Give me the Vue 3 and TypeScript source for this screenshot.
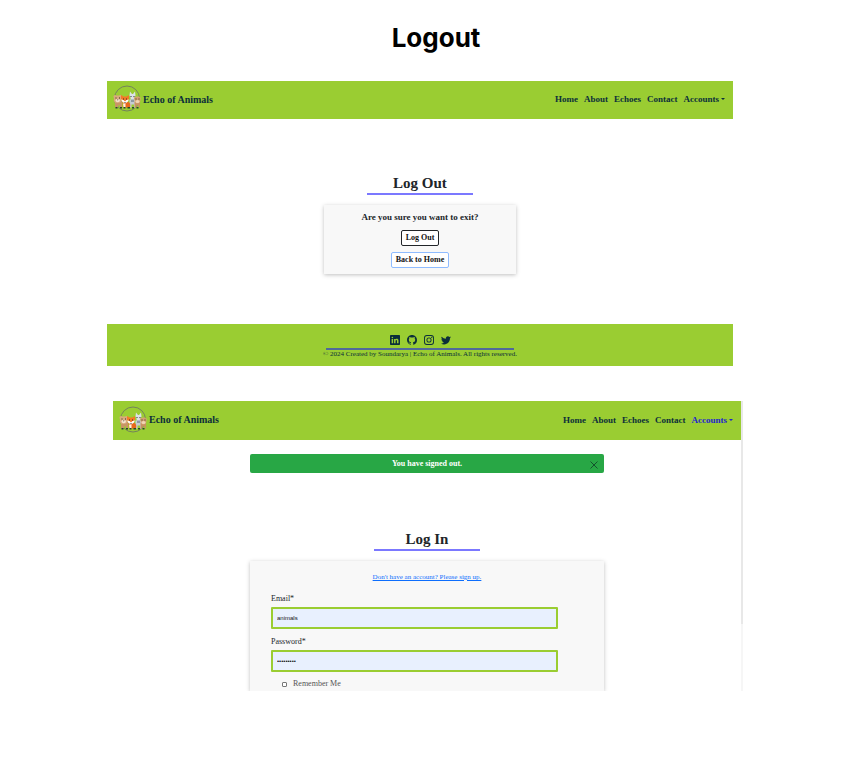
<script setup lang="ts">
import { defineComponent, h, ref } from 'vue'

const links: string[] = ['Home', 'About', 'Echoes', 'Contact']
const email = ref('animals')
const password = ref('animals24')
const remember = ref(false)

interface Social { name: string; path: string }
const socials: Social[] = [
  { name: 'LinkedIn', path: 'M0 1.2C0 .5.5 0 1.200 0h13.600C15.500 0 16 .5 16 1.200v13.600c0 .7-.5 1.200-1.200 1.200H1.200C.5 16 0 15.500 0 14.800zM5 13.300V6.200H2.600v7.100zM3.800 5.200c.8 0 1.300-.6 1.300-1.200S4.600 2.700 3.800 2.700 2.500 3.300 2.500 4s.5 1.200 1.300 1.200zM8.900 13.300V9.400c0-1 .5-1.500 1.200-1.500.8 0 1.100.6 1.100 1.500v3.900h2.400V9.200c0-2.200-1.200-3.200-2.700-3.200-1.300 0-1.800.7-2.100 1.200v-1H6.500v7.100z' },
  { name: 'GitHub', path: 'M8 0C3.580 0 0 3.580 0 8c0 3.540 2.290 6.530 5.470 7.590.4.070.55-.17.55-.38 0-.19-.01-.82-.01-1.490-2.010.37-2.530-.49-2.690-.94-.09-.23-.48-.94-.82-1.130-.28-.15-.68-.52-.01-.53.63-.01 1.080.58 1.230.82.72 1.210 1.870.87 2.330.66.07-.52.28-.87.51-1.070-1.780-.2-3.640-.89-3.640-3.950 0-.87.31-1.590.82-2.150-.08-.2-.36-1.020.08-2.120 0 0 .67-.21 2.200.82a7.600 7.600 0 0 1 4 0c1.530-1.040 2.200-.82 2.200-.82.44 1.100.16 1.920.08 2.120.51.56.82 1.270.82 2.150 0 3.070-1.870 3.750-3.650 3.950.29.25.54.73.54 1.480 0 1.070-.01 1.930-.01 2.200 0 .21.15.46.55.38A8 8 0 0 0 16 8c0-4.420-3.580-8-8-8z' },
  { name: 'Instagram', path: 'M4.700 0h6.600A4.700 4.700 0 0 1 16 4.700v6.600a4.700 4.700 0 0 1-4.700 4.700H4.700A4.700 4.700 0 0 1 0 11.300V4.700A4.700 4.700 0 0 1 4.700 0zM4.700 1.500a3.200 3.200 0 0 0-3.200 3.200v6.600a3.200 3.200 0 0 0 3.200 3.200h6.600a3.200 3.200 0 0 0 3.200-3.200V4.700a3.200 3.200 0 0 0-3.200-3.200zM8 3.900a4.100 4.100 0 1 1 0 8.200 4.100 4.100 0 0 1 0-8.200zM8 5.300a2.700 2.700 0 1 0 0 5.400 2.700 2.700 0 0 0 0-5.400zM12.300 2.700a1 1 0 1 1 0 2 1 1 0 0 1 0-2z' },
  { name: 'Twitter', path: 'M5.026 15c6.038 0 9.341-5.003 9.341-9.334 0-.14 0-.282-.006-.422A6.685 6.685 0 0 0 16 3.542a6.658 6.658 0 0 1-1.889.518 3.301 3.301 0 0 0 1.447-1.817 6.533 6.533 0 0 1-2.087.793A3.286 3.286 0 0 0 7.875 6.030 9.325 9.325 0 0 1 1.114 2.600a3.289 3.289 0 0 0 1.018 4.382A3.323 3.323 0 0 1 .64 6.575v.045a3.288 3.288 0 0 0 2.632 3.218 3.203 3.203 0 0 1-.865.115 3.230 3.230 0 0 1-.614-.057 3.283 3.283 0 0 0 3.067 2.277A6.588 6.588 0 0 1 0 13.580 9.290 9.290 0 0 0 5.026 15z' },
]

// Brand emblem: bear, fox, donkey and calf standing in front of a thin ring.
const BrandLogo = defineComponent({
  setup: () => () =>
    h('svg', { width: 28, height: 28, viewBox: '0 0 56 56', 'aria-hidden': 'true' }, [
      h('circle', { cx: 28, cy: 27, r: 25, fill: 'none', stroke: '#74845a', 'stroke-width': 2 }),
      // bear
      h('path', { d: 'M4 32h14v13h-4v-4h-4v4H4z', fill: '#c89566' }),
      h('path', { d: 'M1 23q0-3 3-3 2 0 3 1h5q1-1 3-1 3 0 3 3l-1 4q1 9-8 9T2 27z', fill: '#d9aa7c' }),
      h('ellipse', { cx: 9.5, cy: 31, rx: 4.5, ry: 3.5, fill: '#f4e2cb' }),
      h('path', { d: 'M8 29h3l-1.500 2zM5 25h2v2H5zM12 25h2v2h-2z', fill: '#3b2b20' }),
      // donkey
      h('path', { d: 'M33 29h12v16h-3v-6h-5v6h-4z', fill: '#c5ccd3' }),
      h('path', { d: 'M33 21l1-8 4 5h2l4-5 1 8-2 4-1 8h-6l-1-8z', fill: '#dce2e8' }),
      h('path', { d: 'M36 29h6v5h-6z', fill: '#8f99a5' }),
      h('path', { d: 'M35 22h2v2h-2zM41 22h2v2h-2z', fill: '#333' }),
      // calf
      h('path', { d: 'M43 33h11v12h-3v-4h-4v4h-4z', fill: '#c89261' }),
      h('path', { d: 'M41 25h3l2-2h6l2 2h2l-1 4q0 8-6 8t-6-8z', fill: '#d3a172' }),
      h('ellipse', { cx: 49, cy: 33, rx: 4, ry: 3, fill: '#f1d5b4' }),
      h('path', { d: 'M45 27h2v2h-2zM51 27h2v2h-2z', fill: '#3b2b20' }),
      // fox
      h('path', { d: 'M19 34h12q5 2 3 11H20z', fill: '#e8691d' }),
      h('path', { d: 'M20 37h5v8h-4z', fill: '#fff1de' }),
      h('path', { d: 'M16 20l5 3h6l5-3v8l-3 5-5 4-5-4-3-5z', fill: '#f37a27' }),
      h('path', { d: 'M16 29l5 1 3 3 3-3 5-1-3 5-5 3-5-3z', fill: '#fff' }),
      h('path', { d: 'M23 34h2v2h-2zM20 27h2v2h-2zM26 27h2v2h-2z', fill: '#3b2b20' }),
      // paws
      h('path', { d: 'M5 44h4v3H5zM14 44h4v3h-4zM21 44h4v3h-4zM29 44h5v3h-5zM38 44h4v3h-4zM47 44h4v3h-4z', fill: '#24472c' }),
    ]),
})
</script>

<template>
  <main class="page">
    <h1 class="title">Logout</h1>

    <section class="screen-logout">
      <header class="bar">
        <a class="brand" href="#"><BrandLogo />Echo of Animals</a>
        <nav class="nav">
          <a v-for="l in links" :key="l" href="#">{{ l }}</a>
          <a class="drop" href="#">Accounts</a>
        </nav>
      </header>
      <div class="body">
        <h2 class="heading">Log Out</h2>
        <form class="card confirm" @submit.prevent>
          <p class="question">Are you sure you want to exit?</p>
          <button class="btn dark" type="submit">Log Out</button>
          <button class="btn blue" type="button">Back to Home</button>
        </form>
      </div>
      <footer class="footer">
        <div class="socials">
          <a v-for="s in socials" :key="s.name" href="#" :aria-label="s.name">
            <svg width="10" height="10" viewBox="0 0 16 16"><path :d="s.path" fill="currentColor" fill-rule="evenodd" /></svg>
          </a>
        </div>
        <hr class="rule" />
        <p class="copy">© 2024 Created by Soundarya | Echo of Animals. All rights reserved.</p>
      </footer>
    </section>

    <section class="screen-login">
      <div class="view">
        <header class="bar tall">
          <a class="brand" href="#"><BrandLogo />Echo of Animals</a>
          <nav class="nav">
            <a v-for="l in links" :key="l" href="#">{{ l }}</a>
            <a class="drop active" href="#">Accounts</a>
          </nav>
        </header>
        <div class="alert" role="status">
          <span>You have signed out.</span>
          <button class="close" type="button" aria-label="Close">
            <svg width="8" height="8" viewBox="0 0 8 8"><path d="M.5.5l7 7M7.500.5l-7 7" stroke="currentColor" fill="none" /></svg>
          </button>
        </div>
        <h2 class="heading">Log In</h2>
        <form class="card login" @submit.prevent>
          <a class="signup" href="#">Don't have an account? Please sign up.</a>
          <label class="label" for="email">Email*</label>
          <input id="email" v-model="email" class="field" type="text" />
          <label class="label" for="password">Password*</label>
          <input id="password" v-model="password" class="field" type="password" />
          <label class="remember"><input v-model="remember" type="checkbox" />Remember Me</label>
        </form>
      </div>
      <div class="track"><div class="thumb"></div></div>
    </section>
  </main>
</template>

<style>
body {
  background: #fff;
}
</style>

<style scoped>
* {
  box-sizing: border-box;
}
.page {
  padding: 20px 0 76px;
  font-family: Georgia, "Liberation Serif", serif;
  color: #212529;
}
h1, h2, p {
  margin: 0;
}
a {
  color: inherit;
  text-decoration: none;
}
.title {
  padding-left: 16px;
  font: 700 26px/36px Inter, sans-serif;
  color: #000;
  text-align: center;
}
.screen-logout {
  margin: 25px 123px 0 107px;
}
.screen-login {
  display: flex;
  margin: 35px 113px 0 113px;
  overflow: hidden;
}
.view {
  flex: 1;
  display: flex;
  flex-direction: column;
  align-items: center;
}
.bar {
  width: 100%;
  height: 38px;
  padding: 0 8px 2px 6px;
  display: flex;
  align-items: center;
  justify-content: space-between;
  background: #9acd32;
  color: #0b2f3a;
  font-weight: 700;
}
.bar.tall {
  height: 39px;
}
.brand {
  display: flex;
  align-items: center;
  gap: 2px;
  font-size: 10px;
}
.nav {
  display: flex;
  gap: 6px;
  font-size: 9px;
}
.drop {
  display: flex;
  align-items: center;
  gap: 2px;
}
.drop::after {
  content: "";
  border: 2px solid transparent;
  border-top-color: currentColor;
  border-bottom: 0;
}
.active {
  color: #1f1fd0;
}
.body {
  padding: 54px 0 50px;
  display: flex;
  flex-direction: column;
  align-items: center;
}
.heading {
  width: 106px;
  border-bottom: 2px solid #7b78ff;
  font-size: 15px;
  line-height: 20px;
  text-align: center;
}
.card {
  margin-top: 10px;
  display: flex;
  flex-direction: column;
  background: #f8f8f8;
  box-shadow: 0 1px 4px rgba(0, 0, 0, 0.25);
}
.confirm {
  width: 192px;
  padding: 5px 0 6px;
  align-items: center;
  gap: 6px;
}
.question {
  font-size: 9px;
  line-height: 14px;
  font-weight: 700;
}
.btn {
  height: 16px;
  padding: 0 4px;
  border: 1px solid #212529;
  border-radius: 2px;
  background: #fff;
  color: #111;
  font: 700 8px/14px Georgia, "Liberation Serif", serif;
}
.btn.blue {
  border-color: #8fbcff;
}
.footer {
  padding: 11px 0 8px;
  display: flex;
  flex-direction: column;
  align-items: center;
  background: #9acd32;
  color: #0b2f3a;
}
.socials {
  display: flex;
  gap: 7px;
}
.socials svg {
  display: block;
}
.rule {
  width: 30%;
  height: 2px;
  margin: 3px 0 0;
  border: 0;
  background: #50699a;
}
.copy {
  font-size: 7px;
  line-height: 8px;
}
.alert {
  position: relative;
  width: 354px;
  height: 19px;
  margin: 14px 0 56px;
  border-radius: 2px;
  background: #28a745;
  color: #fff;
  font-size: 8px;
  font-weight: 700;
  line-height: 19px;
  text-align: center;
}
.close {
  position: absolute;
  right: 6px;
  top: 7px;
  padding: 0;
  border: 0;
  background: none;
  color: #14532d;
}
.close svg {
  display: block;
}
.login {
  width: 354px;
  padding: 11px 46px 1px 21px;
}
.signup {
  align-self: center;
  padding-left: 25px;
  color: #0d6efd;
  font-size: 7px;
  line-height: 10px;
  text-decoration: underline;
}
.label {
  margin-top: 7px;
  font-size: 8px;
  line-height: 12px;
}
.signup + .label {
  margin-top: 11px;
}
.field {
  width: 100%;
  height: 22px;
  margin-top: 2px;
  padding: 0 4px;
  border: 2px solid #9acd32;
  border-radius: 1px;
  background: #e8f0fe;
  color: #111;
  font: 6px "Liberation Sans", sans-serif;
  outline: 0;
}
.remember {
  margin-top: 6px;
  padding-left: 11px;
  display: flex;
  align-items: center;
  gap: 6px;
  color: #555;
  font-size: 8px;
  line-height: 12px;
}
.remember input {
  appearance: none;
  width: 5px;
  height: 5px;
  margin: 0;
  border: 1px solid #777;
  border-radius: 1px;
  background: #fff;
}
.remember input:checked {
  background: #0d6efd;
}
.track {
  width: 2px;
  background: #f6f6f6;
}
.thumb {
  height: 77%;
  background: #e8e8e8;
}
</style>
